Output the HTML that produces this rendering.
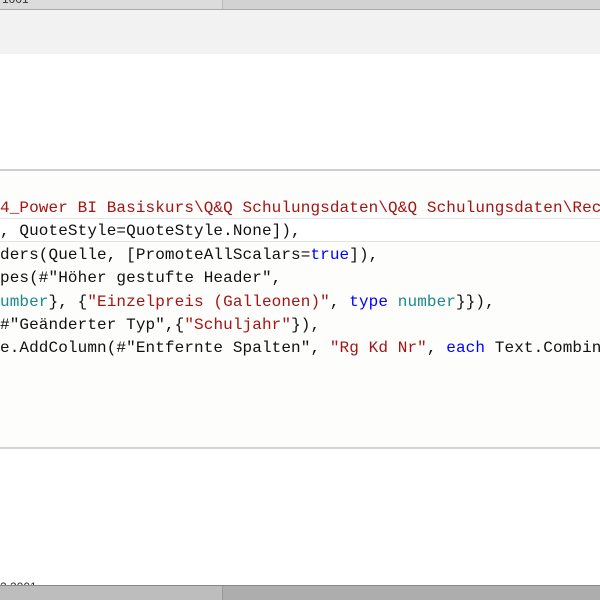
<!DOCTYPE html>
<html><head><meta charset="utf-8"><style>
body{margin:0;width:600px;height:600px;overflow:hidden;background:#fff;position:relative;font-family:"Liberation Sans",sans-serif}
.a{position:absolute;left:0;width:600px}
.code{position:absolute;left:0;font-family:"Liberation Mono",monospace;font-size:16px;letter-spacing:0.1px;white-space:pre;color:#111;line-height:23.4px}
.s{color:#a31515}.k{color:#0000ff}.t{color:#1a8a8a}
</style></head><body>
<div class="a" style="top:0;height:9px;background:#dcdcdc"></div>
<div style="position:absolute;left:222px;top:0;width:1px;height:9px;background:#b8b8b8"></div>
<div style="position:absolute;left:223px;top:0;width:377px;height:9px;background:#d2d2d2"></div>
<div style="position:absolute;left:2px;top:-8px;font-size:12px;color:#333">1001</div>
<div class="a" style="top:9px;height:1px;background:#aaa"></div>
<div class="a" style="top:10px;height:44px;background:#f2f2f2"></div>
<div class="a" style="top:169px;height:2px;background:#cfcfcf"></div>
<div class="a" style="top:171px;height:276px;background:#fdfdfb"></div>
<div class="a" style="top:218px;height:22px;background:#fff;border-top:1px solid #e4e4e4;border-bottom:1px solid #e4e4e4"></div>
<div class="a" style="top:447px;height:2px;background:#d4d4d4"></div>
<div style="position:absolute;left:0;top:580px;font-size:12px;color:#333">2 2001</div>
<div class="a" style="top:585px;height:1px;background:#888"></div>
<div style="position:absolute;left:0;top:586px;width:222px;height:14px;background:#bdbdbd"></div>
<div style="position:absolute;left:222px;top:586px;width:1px;height:14px;background:#999"></div>
<div style="position:absolute;left:223px;top:586px;width:377px;height:14px;background:#adadad"></div>
<div class="code" style="top:197px"><span class="s">4_Power BI Basiskurs\Q&amp;Q Schulungsdaten\Q&amp;Q Schulungsdaten\Rec</span>
, QuoteStyle=QuoteStyle.None]),
ders(Quelle, [PromoteAllScalars=<span class="k">true</span>]),
pes(#"Höher gestufte Header",
<span class="t">umber</span>}, {<span class="s">"Einzelpreis (Galleonen)"</span>, <span class="k">type</span> <span class="t">number</span>}}),
#"Geänderter Typ",{<span class="s">"Schuljahr"</span>}),
e.AddColumn(#"Entfernte Spalten", <span class="s">"Rg Kd Nr"</span>, <span class="k">each</span> Text.Combin</div>
</body></html>
